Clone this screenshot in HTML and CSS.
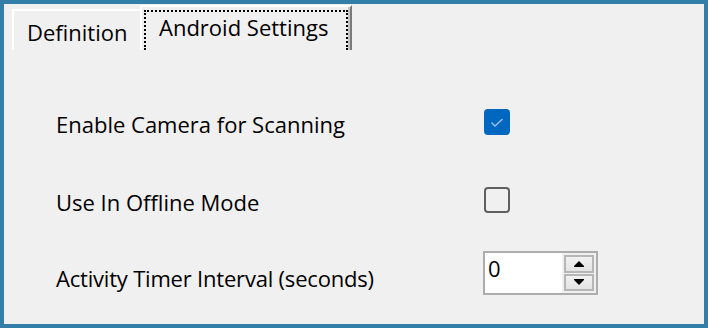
FILE: index.html
```html
<!DOCTYPE html>
<html lang="en">
<head>
    <meta charset="UTF-8">
    <title>Android Settings</title>
    <link rel="stylesheet" href="styles.css">
</head>
<body>
    <div class="ventana">
        <div class="pestanas">
            <div class="pestana">Definition</div>
            <div class="pestana activa">
                <div class="foco">Android Settings</div>
            </div>
        </div>

        <div class="panel">
            <div class="fila">
                <div class="etiqueta">Enable Camera for Scanning</div>
                <div class="casilla marcada">
                    <svg width="26" height="26" viewBox="0 0 26 26">
                        <polyline points="7.5,13.5 11,17 18.5,10" fill="none" stroke="#9cc2ea" stroke-width="1.4"/>
                    </svg>
                </div>
            </div>
            <div class="fila segunda">
                <div class="etiqueta">Use In Offline Mode</div>
                <div class="casilla"></div>
            </div>
            <div class="fila tercera">
                <div class="etiqueta">Activity Timer Interval (seconds)</div>
                <div class="numerico">
                    <div class="valor">0</div>
                    <div class="flechas">
                        <div class="boton">
                            <svg width="10" height="6" viewBox="0 0 10 6"><polygon points="5,0 10,5 10,6 0,6 0,5" fill="#000"/></svg>
                        </div>
                        <div class="boton">
                            <svg width="10" height="6" viewBox="0 0 10 6"><polygon points="0,0 10,0 10,1 5,6 0,1" fill="#000"/></svg>
                        </div>
                    </div>
                </div>
            </div>
        </div>
    </div>
</body>
</html>
```

FILE: styles.css
```css
html, body {
    margin: 0;
    padding: 0;
}
body {
    width: 708px;
    height: 328px;
    overflow: hidden;
    font-family: "Open Sans", sans-serif;
    font-size: 22px;
    line-height: 24px;
    color: #000;
}
.ventana {
    box-sizing: border-box;
    width: 708px;
    height: 328px;
    border: 4px solid #347fa9;
    background-color: #f0f0f0;
}

.pestanas {
    display: flex;
    align-items: flex-end;
    height: 46px;
    padding-left: 8px;
}
.pestana {
    box-sizing: border-box;
    width: 128px;
    height: 41px;
    padding: 9px 0 0 13px;
    border-left: 2px solid #fff;
    border-top: 2px solid #fff;
    border-top-left-radius: 2px;
    white-space: nowrap;
}
.pestana.activa {
    display: flex;
    flex-direction: column;
    width: 212px;
    height: 45px;
    padding: 3px 2px 0 2px;
    border-right: 2px solid #7a7a7a;
    border-top-left-radius: 0;
    box-shadow: inset -2px 0 #c4c4c4;
}
.foco {
    flex: 1;
    padding: 3px 0 0 13px;
    border: 2px dotted #000;
    border-bottom: none;
}

.panel {
    display: flex;
    flex-direction: column;
    padding: 59px 0 0 52px;
}
.fila {
    display: flex;
    align-items: flex-start;
    height: 26px;
}
.fila.segunda {
    margin-top: 52px;
}
.fila.tercera {
    height: 44px;
    margin-top: 38px;
}
.etiqueta {
    width: 428px;
    margin-top: 3px;
    white-space: nowrap;
}
.fila.tercera .etiqueta {
    margin-top: 15px;
    letter-spacing: -0.2px;
}
.fila.tercera .numerico {
    margin-left: -1px;
}

.casilla {
    box-sizing: border-box;
    width: 26px;
    height: 26px;
    border: 2px solid #606060;
    border-radius: 4px;
}
.casilla.marcada {
    border: none;
    background-color: #0067c0;
}
.casilla svg {
    display: block;
}

.numerico {
    box-sizing: border-box;
    display: flex;
    width: 115px;
    height: 44px;
    border: 2px solid #adadad;
    background-color: #fff;
}
.valor {
    flex: 1;
    padding: 3px 0 0 3px;
}
.flechas {
    display: flex;
    flex-direction: column;
    gap: 1px;
    width: 34px;
    padding: 2px;
    box-sizing: border-box;
    background-color: #f0f0f0;
}
.boton {
    box-sizing: border-box;
    flex: 1;
    display: flex;
    justify-content: center;
    align-items: center;
    border: 2px solid #b6b6b6;
    background: linear-gradient(#f2f2f2, #e3e3e3);
}
.boton svg {
    display: block;
}
```
